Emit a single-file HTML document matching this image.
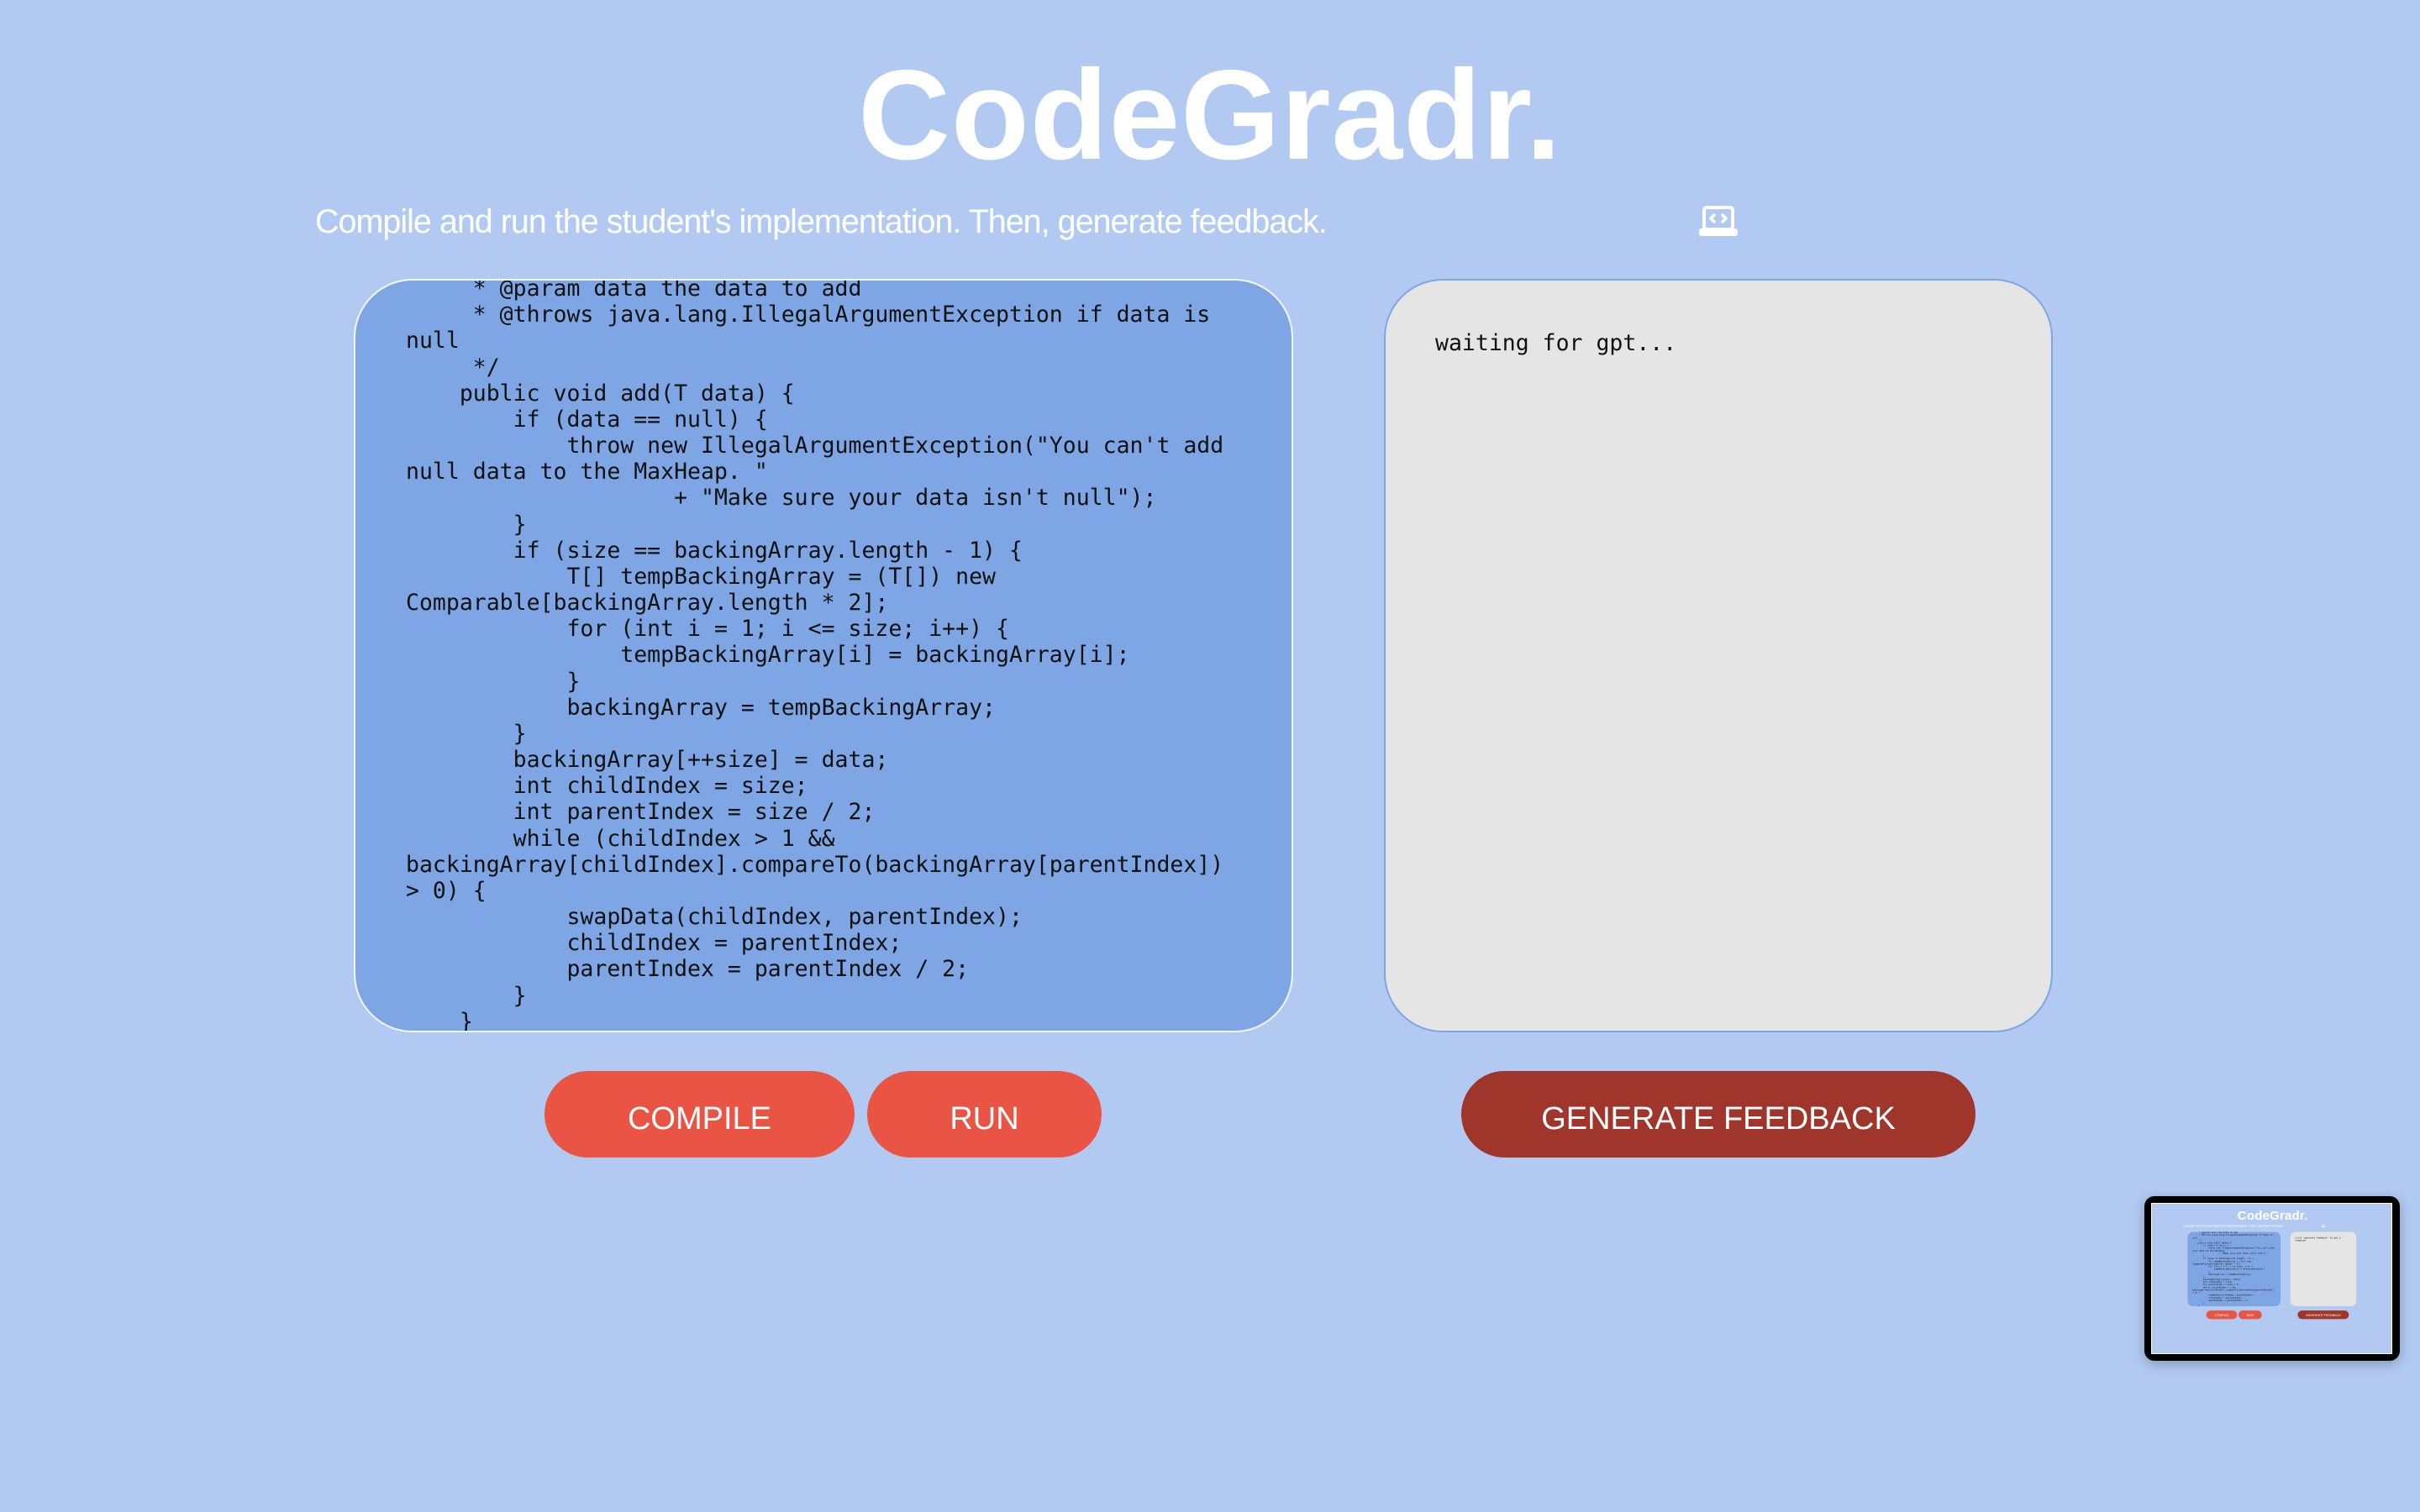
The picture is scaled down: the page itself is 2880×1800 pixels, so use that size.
<!DOCTYPE html>
<html><head><meta charset="utf-8"><style>
*{margin:0;padding:0;box-sizing:border-box}
html,body{width:2880px;height:1800px;overflow:hidden;background:#b2caf2}
.app{position:absolute;left:0;top:0;width:2880px;height:1800px;background:#b2caf2;font-family:"Liberation Sans",sans-serif}
.title{position:absolute;left:0;width:2880px;top:52px;text-align:center;color:#fff;font-weight:bold;font-size:152px;line-height:170px;letter-spacing:1px}
.sub{position:absolute;left:375px;top:240px;color:#fff;font-size:39.5px;line-height:48px;letter-spacing:-1px;white-space:nowrap}
.box{position:absolute;top:332px;height:897px;border-radius:70px;overflow:hidden}
.left{left:421px;width:1118px;background:#7fa6e4;border:2px solid #f2f6fd}
.right{left:1647px;width:796px;background:#e5e5e5;border:2px solid #7fa6e4}
pre{position:absolute;font-family:"DejaVu Sans Mono","Liberation Mono",monospace;font-size:26.5px;line-height:31.17px;color:#111;white-space:pre}
.handle{position:absolute;width:14px;height:14px}
.btn{position:absolute;top:1275px;height:103px;border-radius:52px;color:#fff;font-size:38px;text-align:center;line-height:114px;background:#e95444}
.dark{background:#a0352c}
.thumb{position:absolute;left:2552px;top:1424px;width:304px;height:196px;background:#000;border-radius:12px;box-shadow:0 4px 14px rgba(0,0,0,.25)}
.thumbin{position:absolute;left:8px;top:8px;width:287px;height:180px;overflow:hidden;border:1px solid #fff}
</style></head><body>
<div class="app" id="main">
<div class="title">CodeGradr.</div>
<div class="sub">Compile and run the student's implementation. Then, generate feedback.</div>
<svg style="position:absolute;left:2022px;top:245px" width="46" height="38" viewBox="0 0 46 38"><rect x="6" y="2" width="34" height="26" rx="3" fill="none" stroke="#fff" stroke-width="4"/><rect x="0" y="27" width="46" height="9" rx="3" fill="#fff"/><path d="M18 11l-4 4 4 4M28 11l4 4-4 4" fill="none" stroke="#fff" stroke-width="3.5" stroke-linecap="round" stroke-linejoin="round"/></svg>
<div class="box left"><pre style="left:60px;top:-6px">     * @param data the data to add
     * @throws java.lang.IllegalArgumentException if data is
null
     */
    public void add(T data) {
        if (data == null) {
            throw new IllegalArgumentException("You can't add
null data to the MaxHeap. "
                    + "Make sure your data isn't null");
        }
        if (size == backingArray.length - 1) {
            T[] tempBackingArray = (T[]) new
Comparable[backingArray.length * 2];
            for (int i = 1; i &lt;= size; i++) {
                tempBackingArray[i] = backingArray[i];
            }
            backingArray = tempBackingArray;
        }
        backingArray[++size] = data;
        int childIndex = size;
        int parentIndex = size / 2;
        while (childIndex &gt; 1 &amp;&amp;
backingArray[childIndex].compareTo(backingArray[parentIndex])
&gt; 0) {
            swapData(childIndex, parentIndex);
            childIndex = parentIndex;
            parentIndex = parentIndex / 2;
        }
    }</pre>
<svg class="handle" style="right:2px;bottom:2px" viewBox="0 0 14 14"><path d="M13 3L3 13M13 8L8 13" stroke="#333" stroke-width="1.5"/></svg></div>
<div class="box right"><pre style="left:59px;top:59px">waiting for gpt...</pre>
<svg class="handle" style="right:2px;bottom:2px" viewBox="0 0 14 14"><path d="M13 3L3 13M13 8L8 13" stroke="#333" stroke-width="1.5"/></svg></div>
<div class="btn" style="left:648px;width:369px">COMPILE</div>
<div class="btn" style="left:1032px;width:279px">RUN</div>
<div class="btn dark" style="left:1739px;width:612px">GENERATE FEEDBACK</div>
</div>
<div class="thumb"><div class="thumbin"><div id="mini" style="position:absolute;left:0;top:0;transform:scale(0.0997);transform-origin:0 0"></div></div></div>
<script>
var c=document.getElementById('main').cloneNode(true);c.removeAttribute('id');
var p=c.querySelector('.right pre');p.textContent="click 'generate feedback' to get a\nresponse";
document.getElementById('mini').appendChild(c);
</script>
</body></html>
